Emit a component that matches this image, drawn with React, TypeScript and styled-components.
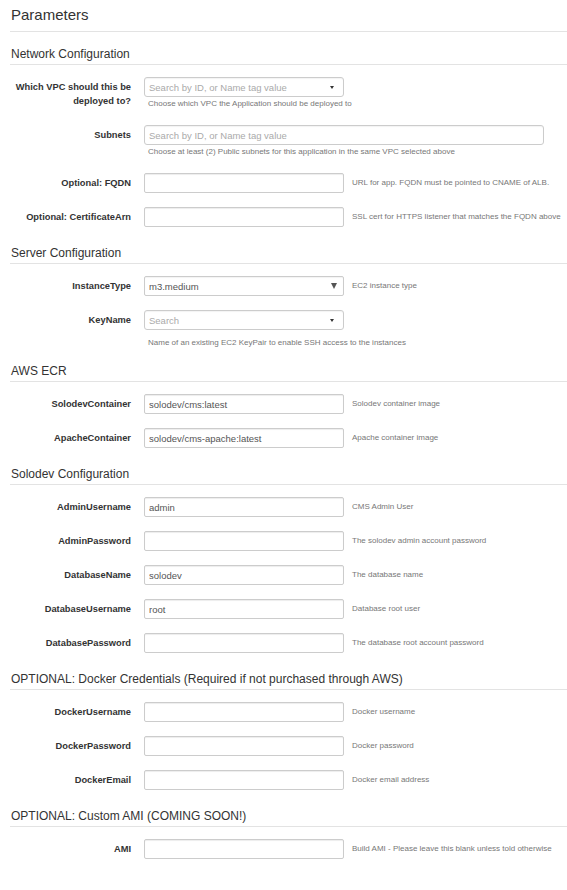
import React from "react";
import styled, { createGlobalStyle } from "styled-components";

const GlobalStyle = createGlobalStyle`
  html, body {
    margin: 0;
    padding: 0;
    background: #ffffff;
  }
  body {
    font-family: "Liberation Sans", Arial, Helvetica, sans-serif;
    color: #333333;
  }
  * { box-sizing: border-box; }
`;

const Page = styled.div`
  width: 567px;
  padding: 0 0 40px 10px;
`;

const Title = styled.h1`
  margin: 6px 0 0;
  padding: 0 0 7px 1px;
  font-size: 15px;
  line-height: 18px;
  font-weight: 400;
  color: #333333;
  border-bottom: 1px solid #e3e3e3;
`;

const SectionHeading = styled.h2<{ $first?: boolean }>`
  margin: ${(p) => (p.$first ? "14px" : "18px")} 0 0;
  padding: 0 0 2px 1px;
  font-size: 12px;
  line-height: 16px;
  font-weight: 400;
  color: #333333;
  border-bottom: 1px solid #e3e3e3;
`;

const SectionBody = styled.div`
  display: flex;
  flex-direction: column;
  gap: 14px;
  padding-top: 12px;
`;

const Row = styled.div`
  display: flex;
  align-items: flex-start;
`;

const Label = styled.label`
  flex: none;
  width: 121px;
  margin-right: 13px;
  padding-top: 3px;
  text-align: right;
  font-size: 9.3px;
  line-height: 14px;
  font-weight: 700;
  color: #333333;
`;

const Field = styled.div`
  display: flex;
  flex-direction: column;
  align-items: flex-start;
`;

const InputLine = styled.div`
  display: flex;
  align-items: center;
`;

const TextInput = styled.input<{ $wide?: boolean }>`
  width: ${(p) => (p.$wide ? "400px" : "200px")};
  height: 20px;
  margin: 0;
  padding: 0 4px;
  border: 1px solid #cccccc;
  border-radius: 2px;
  background: #ffffff;
  box-shadow: inset 0 1px 1px rgba(0, 0, 0, 0.075);
  font-family: "Liberation Sans", Arial, sans-serif;
  font-size: 9.5px;
  color: #555555;
  outline: none;
  &::placeholder {
    color: #b0b0b0;
  }
`;

const SearchBox = styled.div<{ $wide?: boolean; $native?: boolean }>`
  display: flex;
  align-items: center;
  width: ${(p) => (p.$wide ? "400px" : "200px")};
  height: 20px;
  padding: 0 ${(p) => (p.$native ? "6px" : "9px")} 0 4px;
  border: 1px solid #cccccc;
  border-radius: ${(p) => (p.$native ? "2px" : "3px")};
  background: #ffffff;
  box-shadow: inset 0 1px 1px rgba(0, 0, 0, 0.05);
  font-size: 9.5px;
`;

const BoxText = styled.span<{ $muted?: boolean }>`
  flex: 1;
  white-space: nowrap;
  color: ${(p) => (p.$muted ? "#aaaaaa" : "#555555")};
`;

const Caret = styled.span<{ $native?: boolean }>`
  flex: none;
  width: 0;
  height: 0;
  border-left: ${(p) => (p.$native ? "3.5px" : "2.5px")} solid transparent;
  border-right: ${(p) => (p.$native ? "3.5px" : "2.5px")} solid transparent;
  border-top: ${(p) => (p.$native ? "6px" : "3px")} solid
    ${(p) => (p.$native ? "#555555" : "#333333")};
`;

const HelpInline = styled.span`
  margin-left: 8px;
  font-size: 8px;
  line-height: 20px;
  color: #777777;
  white-space: nowrap;
`;

const HelpBelow = styled.span<{ $far?: boolean }>`
  margin: ${(p) => (p.$far ? "8px 0 -3px 4px" : "2px 0 2px 4px")};
  font-size: 8px;
  line-height: 10px;
  color: #777777;
  white-space: nowrap;
`;

type Kind = "text" | "search" | "multi" | "native";

interface Param {
  label: string;
  kind: Kind;
  value?: string;
  placeholder?: string;
  help: string;
  below?: boolean;
  far?: boolean;
}

interface Section {
  title: string;
  params: Param[];
}

const sections: Section[] = [
  {
    title: "Network Configuration",
    params: [
      {
        label: "Which VPC should this be deployed to?",
        kind: "search",
        placeholder: "Search by ID, or Name tag value",
        help: "Choose which VPC the Application should be deployed to",
        below: true,
      },
      {
        label: "Subnets",
        kind: "multi",
        placeholder: "Search by ID, or Name tag value",
        help: "Choose at least (2) Public subnets for this application in the same VPC selected above",
        below: true,
      },
      {
        label: "Optional: FQDN",
        kind: "text",
        help: "URL for app. FQDN must be pointed to CNAME of ALB.",
      },
      {
        label: "Optional: CertificateArn",
        kind: "text",
        help: "SSL cert for HTTPS listener that matches the FQDN above",
      },
    ],
  },
  {
    title: "Server Configuration",
    params: [
      {
        label: "InstanceType",
        kind: "native",
        value: "m3.medium",
        help: "EC2 instance type",
      },
      {
        label: "KeyName",
        kind: "search",
        placeholder: "Search",
        help: "Name of an existing EC2 KeyPair to enable SSH access to the instances",
        below: true,
        far: true,
      },
    ],
  },
  {
    title: "AWS ECR",
    params: [
      {
        label: "SolodevContainer",
        kind: "text",
        value: "solodev/cms:latest",
        help: "Solodev container image",
      },
      {
        label: "ApacheContainer",
        kind: "text",
        value: "solodev/cms-apache:latest",
        help: "Apache container image",
      },
    ],
  },
  {
    title: "Solodev Configuration",
    params: [
      { label: "AdminUsername", kind: "text", value: "admin", help: "CMS Admin User" },
      { label: "AdminPassword", kind: "text", help: "The solodev admin account password" },
      { label: "DatabaseName", kind: "text", value: "solodev", help: "The database name" },
      { label: "DatabaseUsername", kind: "text", value: "root", help: "Database root user" },
      { label: "DatabasePassword", kind: "text", help: "The database root account password" },
    ],
  },
  {
    title: "OPTIONAL: Docker Credentials (Required if not purchased through AWS)",
    params: [
      { label: "DockerUsername", kind: "text", help: "Docker username" },
      { label: "DockerPassword", kind: "text", help: "Docker password" },
      { label: "DockerEmail", kind: "text", help: "Docker email address" },
    ],
  },
  {
    title: "OPTIONAL: Custom AMI (COMING SOON!)",
    params: [
      {
        label: "AMI",
        kind: "text",
        help: "Build AMI - Please leave this blank unless told otherwise",
      },
    ],
  },
];

function Control({ p }: { p: Param }) {
  if (p.kind === "text") {
    return <TextInput type="text" defaultValue={p.value ?? ""} readOnly />;
  }
  if (p.kind === "multi") {
    return (
      <SearchBox $wide>
        <BoxText $muted>{p.placeholder}</BoxText>
      </SearchBox>
    );
  }
  if (p.kind === "native") {
    return (
      <SearchBox $native>
        <BoxText>{p.value}</BoxText>
        <Caret $native />
      </SearchBox>
    );
  }
  return (
    <SearchBox>
      <BoxText $muted>{p.placeholder}</BoxText>
      <Caret />
    </SearchBox>
  );
}

function ParamRow({ p }: { p: Param }) {
  return (
    <Row>
      <Label>{p.label}</Label>
      <Field>
        <InputLine>
          <Control p={p} />
          {!p.below && <HelpInline>{p.help}</HelpInline>}
        </InputLine>
        {p.below && <HelpBelow $far={p.far}>{p.help}</HelpBelow>}
      </Field>
    </Row>
  );
}

export default function App() {
  return (
    <>
      <GlobalStyle />
      <Page>
        <Title>Parameters</Title>
        {sections.map((s, i) => (
          <React.Fragment key={s.title}>
            <SectionHeading $first={i === 0}>{s.title}</SectionHeading>
            <SectionBody>
              {s.params.map((p) => (
                <ParamRow key={p.label} p={p} />
              ))}
            </SectionBody>
          </React.Fragment>
        ))}
      </Page>
    </>
  );
}
